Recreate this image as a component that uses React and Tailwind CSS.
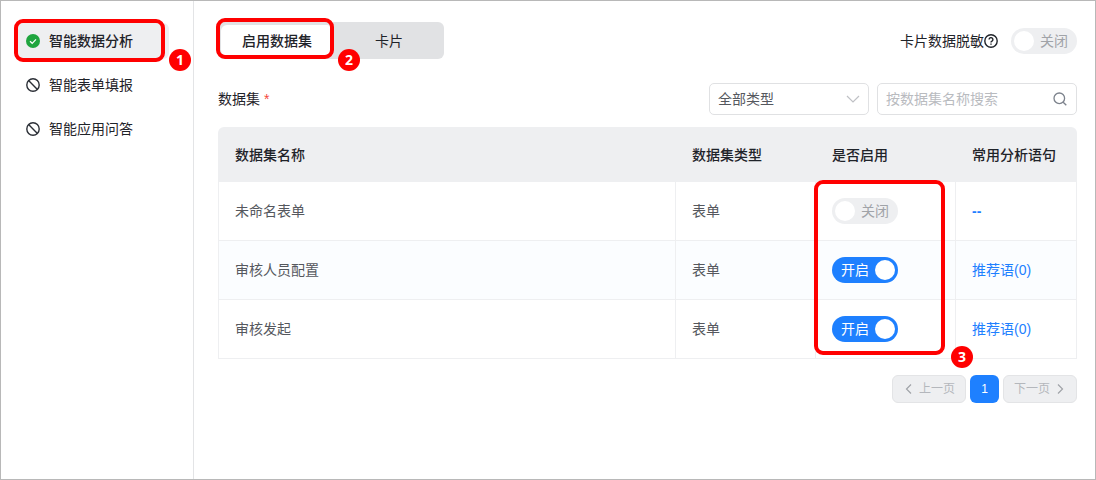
import { useState } from 'react';
import clsx from 'clsx';

const MENU = [
  { label: '智能数据分析', enabled: true },
  { label: '智能表单填报', enabled: false },
  { label: '智能应用问答', enabled: false },
];

const DATASETS = [
  { name: '未命名表单', type: '表单', enabled: false, phrases: '--' },
  { name: '审核人员配置', type: '表单', enabled: true, phrases: '推荐语(0)' },
  { name: '审核发起', type: '表单', enabled: true, phrases: '推荐语(0)' },
];

function CheckIcon() {
  return (
    <svg className="size-[14px] shrink-0" viewBox="0 0 14 14" fill="none" aria-hidden="true">
      <circle cx="7" cy="7" r="7" fill="#1fa53f" />
      <path d="M4 7.2l2.2 2.1L10 5.3" stroke="#fff" strokeWidth="1.2" />
    </svg>
  );
}

function BanIcon() {
  return (
    <svg className="size-[14px] shrink-0" viewBox="0 0 14 14" fill="none" stroke="#2b2f36" strokeWidth="1.4" aria-hidden="true">
      <circle cx="7" cy="7" r="6.2" />
      <path d="M2.6 2.6l8.8 8.8" />
    </svg>
  );
}

function HelpIcon() {
  return (
    <svg className="size-[14px] shrink-0" viewBox="0 0 14 14" fill="none" stroke="#1f2329" strokeWidth="1.4" aria-hidden="true">
      <circle cx="7" cy="7" r="6.2" />
      <path d="M5.1 5.6a1.9 1.9 0 1 1 2.9 1.6c-.7.4-1 .7-1 1.3" />
      <path d="M7 9.4v1.3" />
    </svg>
  );
}

function Toggle({ label, defaultChecked = false }) {
  const [on, setOn] = useState(defaultChecked);
  return (
    <label
      className={clsx(
        'relative flex h-[26px] w-[66px] cursor-pointer items-center justify-between rounded-full px-[3px] text-sm leading-5',
        on ? 'bg-[#1e80ff] text-white' : 'flex-row-reverse bg-[#eeeff1] text-[#a0a3a8]'
      )}
    >
      <input
        type="checkbox"
        role="switch"
        aria-label={label}
        checked={on}
        onChange={() => setOn(!on)}
        className="sr-only"
      />
      <span className="px-[6px]">{on ? '开启' : '关闭'}</span>
      <span className="size-5 rounded-full bg-white" />
    </label>
  );
}

// Red frame and numbered dot of a walkthrough step
function Frame({ className }) {
  return <span className={clsx('pointer-events-none absolute rounded-[9px] border-4 border-[#ff0000]', className)} />;
}

function Step({ n, className }) {
  return (
    <span
      className={clsx(
        'pointer-events-none absolute flex size-[22px] items-center justify-center rounded-full bg-[#ff0000] font-["Open_Sans",sans-serif] text-sm font-bold text-white',
        className
      )}
    >
      {n}
    </span>
  );
}

function Sidebar() {
  return (
    <nav className="w-[193px] shrink-0 border-r border-[#e3e4e6] pl-4 pr-6 pt-[22px]">
      <ul className="flex flex-col gap-2">
        {MENU.map((item, i) => (
          <li key={item.label} className="relative">
            <button
              type="button"
              className={clsx(
                'flex h-9 w-full items-center gap-[9px] rounded-md px-[9px] text-sm text-[#1f2329]',
                i === 0 && 'bg-[#eeeff1] font-medium'
              )}
            >
              {item.enabled ? <CheckIcon /> : <BanIcon />}
              {item.label}
            </button>
            {i === 0 && (
              <>
                <Frame className="-bottom-[3px] -left-[3px] -top-1 right-1" />
                <Step n={1} className="-bottom-3 -right-[22px]" />
              </>
            )}
          </li>
        ))}
      </ul>
    </nav>
  );
}

function DatasetTable() {
  const th = 'h-[55px] bg-[#eeeff1] px-4 text-left font-medium text-[#1f2329]';
  const td = 'h-[59px] border-b border-r border-[#eeeff1] px-4';
  return (
    <div className="relative mt-3">
      <table className="w-full table-fixed border-separate border-spacing-0 text-sm text-[#55585e]">
        <colgroup>
          <col />
          <col className="w-[140px]" />
          <col className="w-[140px]" />
          <col className="w-[121px]" />
        </colgroup>
        <thead>
          <tr>
            <th className={clsx(th, 'rounded-tl-md pl-[17px]')}>数据集名称</th>
            <th className={th}>数据集类型</th>
            <th className={th}>是否启用</th>
            <th className={clsx(th, 'rounded-tr-md')}>常用分析语句</th>
          </tr>
        </thead>
        <tbody>
          {DATASETS.map((row) => (
            <tr key={row.name} className="even:bg-[#fbfdff]">
              <td className={clsx(td, 'border-l')}>{row.name}</td>
              <td className={td}>{row.type}</td>
              <td className={td}>
                <Toggle label={`是否启用 ${row.name}`} defaultChecked={row.enabled} />
              </td>
              <td className={td}>
                <a href="#phrases" className={clsx('text-[#1e80ff]', !row.enabled && 'font-bold')}>{row.phrases}</a>
              </td>
            </tr>
          ))}
        </tbody>
      </table>
      <Frame className="bottom-1 right-[132px] top-[53px] w-[131px]" />
      <Step n={3} className="-bottom-[9px] right-[104px]" />
    </div>
  );
}

function Pagination() {
  const btn = 'flex h-7 w-[74px] items-center justify-center gap-1 rounded-md border border-[#e3e4e6] bg-[#eeeff1] text-xs text-[#b4b7bc]';
  return (
    <div className="mt-4 flex justify-end gap-1">
      <button type="button" disabled className={btn}>
        <svg className="size-3" viewBox="0 0 12 12" fill="none" stroke="#a0a3a8" strokeWidth="1.2" aria-hidden="true">
          <path d="M8 1.5L3.5 6 8 10.5" />
        </svg>
        上一页
      </button>
      <button type="button" className="h-7 w-[29px] rounded-md bg-[#1e80ff] text-xs text-white">1</button>
      <button type="button" disabled className={btn}>
        下一页
        <svg className="size-3" viewBox="0 0 12 12" fill="none" stroke="#a0a3a8" strokeWidth="1.2" aria-hidden="true">
          <path d="M4 1.5L8.5 6 4 10.5" />
        </svg>
      </button>
    </div>
  );
}

export default function App() {
  const [tab, setTab] = useState('dataset');
  const tabCls = (name) =>
    clsx('h-[31px] w-full rounded-md text-sm text-[#1f2329]', tab === name && 'bg-white font-medium');

  return (
    <div className="flex min-h-screen border border-[#b8b8b8] bg-white font-['Liberation_Sans','Noto_Sans_CJK_SC',sans-serif] text-[#1f2329]">
      <Sidebar />

      <main className="min-w-0 flex-1 pb-6 pl-6 pr-[18px] pt-[21px]">
        <div className="flex items-center justify-between">
          <div className="relative flex w-[226px] gap-1 rounded-md bg-[#e1e2e4] p-[3px]">
            <div className="w-[112px]">
              <button type="button" onClick={() => setTab('dataset')} className={tabCls('dataset')}>启用数据集</button>
            </div>
            <div className="flex-1">
              <button type="button" onClick={() => setTab('card')} className={tabCls('card')}>卡片</button>
            </div>
            <Frame className="-left-[2px] -top-1 bottom-0 w-[118px]" />
            <Step n={2} className="-bottom-3 left-[120px]" />
          </div>

          <div className="flex items-center gap-[13px]">
            <span className="flex items-center text-sm">
              卡片数据脱敏
              <HelpIcon />
            </span>
            <Toggle label="卡片数据脱敏" />
          </div>
        </div>

        <div className="mt-6 flex items-center justify-between">
          <h2 className="text-sm">
            数据集 <span className="text-[#f5483b]">*</span>
          </h2>
          <div className="flex gap-2">
            <div className="relative w-40">
              <select
                aria-label="数据集类型"
                className="h-8 w-full appearance-none rounded-[5px] border border-[#e0e1e3] bg-white px-2 text-sm text-[#55585e]"
              >
                <option>全部类型</option>
                <option>表单</option>
              </select>
              <svg className="pointer-events-none absolute right-[9px] top-[9px] size-[14px]" viewBox="0 0 14 14" fill="none" stroke="#bfc1c5" strokeWidth="1.2" aria-hidden="true">
                <path d="M1 4l6 6 6-6" />
              </svg>
            </div>
            <label className="flex h-8 w-[200px] items-center rounded-[5px] border border-[#e0e1e3] pl-2 pr-[9px]">
              <input
                type="text"
                aria-label="按数据集名称搜索"
                placeholder="按数据集名称搜索"
                className="min-w-0 flex-1 text-sm outline-none placeholder:text-[#b9bbbf]"
              />
              <svg className="size-[14px] shrink-0" viewBox="0 0 14 14" fill="none" stroke="#7c828c" strokeWidth="1.3" aria-hidden="true">
                <circle cx="6.3" cy="6.3" r="5.3" />
                <path d="M10.2 10.2l3.1 3.1" />
              </svg>
            </label>
          </div>
        </div>

        <DatasetTable />
        <Pagination />
      </main>
    </div>
  );
}
